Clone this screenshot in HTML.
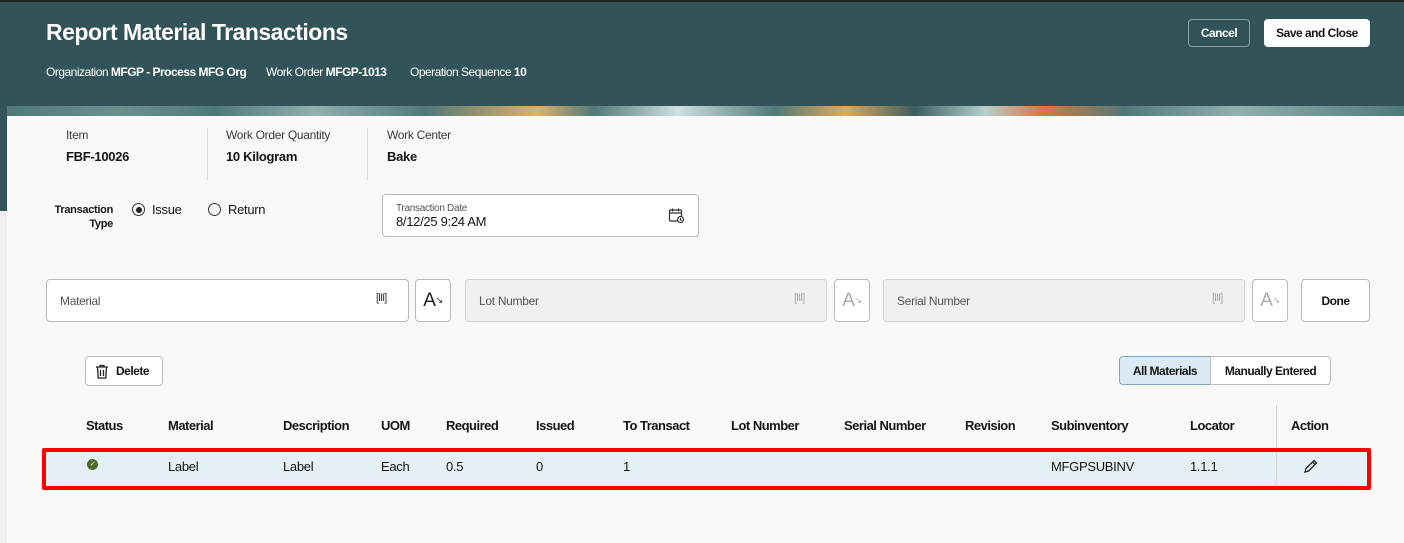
<!DOCTYPE html>
<html><head><meta charset="utf-8"><style>
*{box-sizing:border-box;margin:0;padding:0}
body{width:1404px;height:543px;overflow:hidden;background:#f1efed;font-family:"Liberation Sans",sans-serif;color:#161513;position:relative;letter-spacing:-0.3px}
.hdr{position:absolute;left:0;top:0;width:1404px;height:116px;background:#325357;border-top:2px solid #222}
.leftstrip{position:absolute;left:0;top:116px;width:7px;height:95px;background:#325357}
.band{position:absolute;left:7px;top:106px;width:1397px;height:10px;background:linear-gradient(90deg,#4f7a78 0,#6a908e 8%,#4f7a78 15%,#8fb1b0 22%,#4f7a78 30%,#e0b067 38%,#4f7a78 42%,#cfe0e0 48%,#4f7a78 55%,#e3a95a 60%,#3a5f5f 65%,#b7cfd0 70%,#d9793f 74%,#4f7a78 80%,#8fb1b0 88%,#4f7a78 100%)}
.panel{position:absolute;left:7px;top:116px;width:1397px;height:427px;background:#faf9f8}
.t{position:absolute;white-space:nowrap}
h1{position:absolute;left:46px;top:19px;font-size:23px;font-weight:bold;color:#fff;letter-spacing:-0.5px}
.sub{position:absolute;top:65px;font-size:12px;color:#fff;letter-spacing:-0.5px}
.btn{position:absolute;border-radius:4px;font-size:12px;font-weight:bold;display:flex;align-items:center;justify-content:center;letter-spacing:-0.5px}
.lbl{font-size:12px;color:#3d3b39}
.val{font-size:13px;font-weight:bold}
.vsep{position:absolute;width:1px;background:#dedcda}
.inp{position:absolute;border:1px solid #bcbab8;border-radius:4px;background:#fff;height:43px;top:279px}
.inp.dis{background:#f1f0ef;border-color:#d6d4d2}
.inp span{position:absolute;left:13px;top:14px;font-size:12px;color:#56534f}
.ib{position:absolute;top:279px;width:36px;height:43px;border:1px solid #bcbab8;border-radius:4px;background:#fff;font-size:19px;display:flex;align-items:center;justify-content:center;color:#222}
.th{position:absolute;top:418px;font-size:13px;font-weight:bold;color:#161513;letter-spacing:-0.5px}
.td{position:absolute;top:459px;font-size:13px;color:#161513}
</style></head><body>
<div class="hdr"></div>
<div class="leftstrip"></div>
<div class="band"></div>
<div class="panel"></div>
<h1>Report Material Transactions</h1>
<div class="sub" style="left:46px">Organization <b>MFGP - Process MFG Org</b></div>
<div class="sub" style="left:266px">Work Order <b>MFGP-1013</b></div>
<div class="sub" style="left:410px">Operation Sequence <b>10</b></div>
<div class="btn" style="left:1188px;top:19px;width:62px;height:28px;border:1px solid #8aa0a2;color:#fff">Cancel</div>
<div class="btn" style="left:1264px;top:19px;width:106px;height:28px;background:#fff;color:#161513">Save and Close</div>

<div class="t lbl" style="left:66px;top:128px">Item</div>
<div class="t val" style="left:66px;top:149px">FBF-10026</div>
<div class="vsep" style="left:207px;top:128px;height:52px"></div>
<div class="t lbl" style="left:226px;top:128px">Work Order Quantity</div>
<div class="t val" style="left:226px;top:149px">10 Kilogram</div>
<div class="vsep" style="left:367px;top:128px;height:52px"></div>
<div class="t lbl" style="left:387px;top:128px">Work Center</div>
<div class="t val" style="left:387px;top:149px">Bake</div>

<div class="t" style="left:50px;top:203px;font-size:11px;font-weight:bold;text-align:right;line-height:14px;width:63px">Transaction<br>Type</div>
<div class="t" style="left:132px;top:203px;width:13px;height:13px;border:1px solid #333;border-radius:50%"><div style="margin:2.5px;width:6px;height:6px;border-radius:50%;background:#222"></div></div>
<div class="t" style="left:152px;top:202px;font-size:13px">Issue</div>
<div class="t" style="left:208px;top:203px;width:13px;height:13px;border:1px solid #333;border-radius:50%"></div>
<div class="t" style="left:228px;top:202px;font-size:13px">Return</div>
<div class="t" style="left:382px;top:194px;width:317px;height:43px;border:1px solid #bcbab8;border-radius:4px;background:#fff"></div>
<div class="t" style="left:396px;top:203px;font-size:10px;color:#56534f">Transaction Date</div>
<div class="t" style="left:396px;top:214px;font-size:13px">8/12/25 9:24 AM</div>
<svg class="t" style="left:668px;top:207px" width="17" height="17" viewBox="0 0 17 17" fill="none" stroke="#333" stroke-width="1.2"><rect x="1.5" y="3" width="12" height="11" rx="1"/><path d="M1.5 6h12M4.5 1.5v3M10.5 1.5v3"/><circle cx="12.5" cy="12.5" r="3" fill="#fff"/><path d="M12.5 11v1.7l1 .8"/></svg>

<div class="inp" style="left:46px;width:363px"><span>Material</span></div>
<div class="t" style="left:376px;top:292px;font-size:11px;color:#333;letter-spacing:-1px">[III]</div>
<div class="ib" style="left:415px">A<sub style="font-size:9px">↘</sub></div>
<div class="inp dis" style="left:465px;width:362px"><span>Lot Number</span></div>
<div class="t" style="left:794px;top:292px;font-size:11px;color:#aaa;letter-spacing:-1px">[III]</div>
<div class="ib" style="left:834px;color:#aaa">A<sub style="font-size:9px">↘</sub></div>
<div class="inp dis" style="left:883px;width:362px"><span>Serial Number</span></div>
<div class="t" style="left:1212px;top:292px;font-size:11px;color:#aaa;letter-spacing:-1px">[III]</div>
<div class="ib" style="left:1252px;color:#aaa">A<sub style="font-size:9px">↘</sub></div>
<div class="btn" style="left:1301px;top:279px;width:69px;height:43px;border:1px solid #bcbab8;background:#fff">Done</div>

<div class="btn" style="left:85px;top:356px;width:78px;height:30px;border:1px solid #bcbab8;background:#fff;justify-content:flex-start;padding-left:9px">
<svg width="14" height="15" viewBox="0 0 14 15" fill="none" stroke="#222" stroke-width="1.3"><path d="M1 3h12M5 3V1.5h4V3M2.5 3l.7 11h7.6l.7-11M5.5 6v6M8.5 6v6"/></svg><span style="margin-left:7px">Delete</span></div>
<div class="btn" style="left:1119px;top:356px;width:92px;height:29px;border:1px solid #7fa7c0;background:#dcebf3;border-radius:4px 0 0 4px">All Materials</div>
<div class="btn" style="left:1210px;top:356px;width:121px;height:29px;border:1px solid #bcbab8;background:#fff;border-radius:0 4px 4px 0">Manually Entered</div>

<div class="th" style="left:86px">Status</div>
<div class="th" style="left:168px">Material</div>
<div class="th" style="left:283px">Description</div>
<div class="th" style="left:381px">UOM</div>
<div class="th" style="left:446px">Required</div>
<div class="th" style="left:536px">Issued</div>
<div class="th" style="left:623px">To Transact</div>
<div class="th" style="left:731px">Lot Number</div>
<div class="th" style="left:844px">Serial Number</div>
<div class="th" style="left:965px">Revision</div>
<div class="th" style="left:1051px">Subinventory</div>
<div class="th" style="left:1190px">Locator</div>
<div class="th" style="left:1291px">Action</div>
<div class="vsep" style="left:1276px;top:405px;height:82px;background:#d6d4d2"></div>

<div class="t" style="left:42px;top:448px;width:1329px;height:42px;border:4px solid #f00;border-radius:2px;background:#e4f0f6"></div>
<div class="vsep" style="left:1276px;top:452px;height:34px;background:#d6d4d2"></div>
<div class="t" style="left:87px;top:459px;width:11px;height:11px;border-radius:50%;background:#4d6b2a;color:#fff;font-size:7px;text-align:center;line-height:11px">✓</div>
<div class="td" style="left:168px">Label</div>
<div class="td" style="left:283px">Label</div>
<div class="td" style="left:381px">Each</div>
<div class="td" style="left:446px">0.5</div>
<div class="td" style="left:536px">0</div>
<div class="td" style="left:623px">1</div>
<div class="td" style="left:1051px">MFGPSUBINV</div>
<div class="td" style="left:1190px">1.1.1</div>
<svg class="t" style="left:1303px;top:459px" width="15" height="15" viewBox="0 0 15 15" fill="none" stroke="#222" stroke-width="1.3"><path d="M2 13l1-3.5L11 1.5l2.5 2.5-8 8z M9.5 3l2.5 2.5"/></svg>
</body></html>
